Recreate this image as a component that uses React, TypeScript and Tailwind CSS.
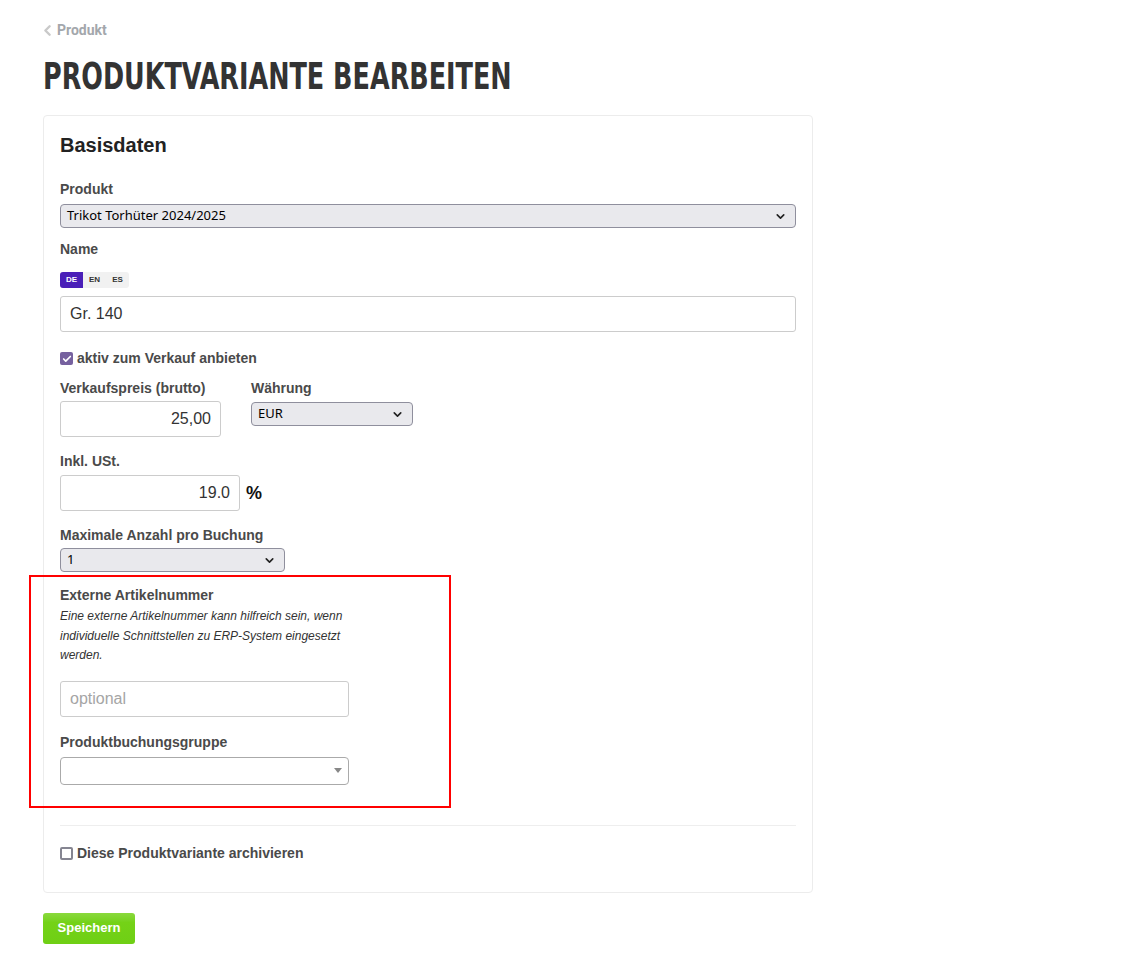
import { ChevronLeft, ChevronDown, Check } from "lucide-react";

const labelCls =
  "block text-[14px] font-bold leading-5 text-[#4a4a4a] font-['Liberation_Sans',Arial,sans-serif]";

const selectCls =
  "flex h-6 items-center justify-between rounded-[4px] border border-[#8f8f9d] bg-[#e9e9ed] pl-[6px] pr-[8px] text-[13px] text-black font-['Noto_Sans','Open_Sans',sans-serif]";

const inputCls =
  "flex h-9 items-center rounded-[3px] border border-[#cccccc] bg-white px-[9px] text-[16px] text-[#333] font-['Liberation_Sans',Arial,sans-serif]";

function FakeSelect({ value, className }: { value: string; className: string }) {
  return (
    <div className={`${selectCls} ${className}`}>
      <span>{value}</span>
      <ChevronDown size={13} strokeWidth={3} className="text-[#222]" />
    </div>
  );
}

function LangTabs() {
  return (
    <div className="flex h-4 w-fit overflow-hidden rounded-[3px] bg-[#f1f1f1] text-[8px] font-bold leading-4 font-['Liberation_Sans',Arial,sans-serif]">
      <span className="w-[23px] bg-[#4a1fb8] text-center text-white">DE</span>
      <span className="w-[23px] text-center text-[#333]">EN</span>
      <span className="w-[23px] text-center text-[#333]">ES</span>
    </div>
  );
}

export default function App() {
  return (
    <div className="min-h-screen bg-white px-[43px] pt-[20px] pb-6 font-['Liberation_Sans',Arial,sans-serif]">
      <a className="flex items-center gap-[1px] text-[14px] font-bold text-[#a3a7ac] font-['Roboto',sans-serif]">
        <ChevronLeft size={17} strokeWidth={3.4} className="-ml-[4px] text-[#c9c9c9]" />
        Produkt
      </a>

      <h1 className="mt-[12px] origin-left scale-x-[0.745] whitespace-nowrap text-[38px] font-bold uppercase leading-[46px] text-[#333] font-['DejaVu_Sans_Condensed','DejaVu_Sans',sans-serif]">
        Produktvariante bearbeiten
      </h1>

      <div className="mt-[16px] w-[770px] rounded-[4px] border border-[#ececec] px-[16px] pt-[17px] pb-[28px]">
        <h2 className="text-[20px] font-bold leading-6 text-[#222]">Basisdaten</h2>

        <div className="mt-[22px]">
          <label className={labelCls}>Produkt</label>
          <FakeSelect value="Trikot Torhüter 2024/2025" className="mt-[5px] w-full" />
        </div>

        <div className="mt-[11px]">
          <label className={labelCls}>Name</label>
          <div className="mt-[13px]">
            <LangTabs />
          </div>
          <div className={`${inputCls} mt-[8px] w-full`}>Gr. 140</div>
        </div>

        <label className="mt-[16px] flex items-center gap-[4px] text-[14px] font-bold text-[#4a4a4a]">
          <span className="flex h-[13px] w-[13px] items-center justify-center rounded-[2px] bg-[#76619f]">
            <Check size={10} strokeWidth={4} className="text-white" />
          </span>
          aktiv zum Verkauf anbieten
        </label>

        <div className="mt-[9px] flex gap-[30px]">
          <div>
            <label className={labelCls}>Verkaufspreis (brutto)</label>
            <div className={`${inputCls} mt-[3px] w-[161px] justify-end`}>25,00</div>
          </div>
          <div>
            <label className={labelCls}>Währung</label>
            <FakeSelect value="EUR" className="mt-[4px] w-[162px]" />
          </div>
        </div>

        <div className="mt-[14px]">
          <label className={labelCls}>Inkl. USt.</label>
          <div className="mt-[4px] flex items-center gap-[6px]">
            <div className={`${inputCls} w-[180px] justify-end`}>19.0</div>
            <span className="text-[18px] font-bold text-[#111]">%</span>
          </div>
        </div>

        <div className="mt-[14px]">
          <label className={labelCls}>Maximale Anzahl pro Buchung</label>
          <FakeSelect value="1" className="mt-[3px] w-[225px]" />
        </div>

        <div className="mt-[3px] -ml-[31px] w-[422px] border-2 border-[#ff0000] pl-[29px] pt-[8px] pb-[21px]">
          <label className={labelCls}>Externe Artikelnummer</label>
          <p className="mt-[2px] w-[300px] text-[12px] italic leading-[19.5px] text-[#333]">
            Eine externe Artikelnummer kann hilfreich sein, wenn individuelle Schnittstellen zu ERP-System eingesetzt werden.
          </p>
          <div className={`${inputCls} mt-[15px] w-[289px] text-[#a5a5a5]`}>optional</div>
          <label className={`${labelCls} mt-[15px]`}>Produktbuchungsgruppe</label>
          <div className="mt-[5px] flex h-[28px] w-[289px] items-center justify-end rounded-[4px] border border-[#aaaaaa] bg-white pr-[6px]">
            <span className="h-0 w-0 border-x-[4px] border-t-[5px] border-x-transparent border-t-[#888]" />
          </div>
        </div>

        <div className="mt-[17px] border-t border-[#eeeeee]" />

        <label className="mt-[17px] flex items-center gap-[4px] text-[14px] font-bold text-[#4a4a4a]">
          <span className="h-[13px] w-[13px] rounded-[2px] border-2 border-[#858591] bg-white" />
          Diese Produktvariante archivieren
        </label>
      </div>

      <button className="mt-[20px] h-[31px] w-[92px] rounded-[3px] bg-gradient-to-b from-[#8ad93c] from-0% via-[#74d217] via-30% to-[#6fcf15] text-[13px] font-bold text-white">
        Speichern
      </button>
    </div>
  );
}
